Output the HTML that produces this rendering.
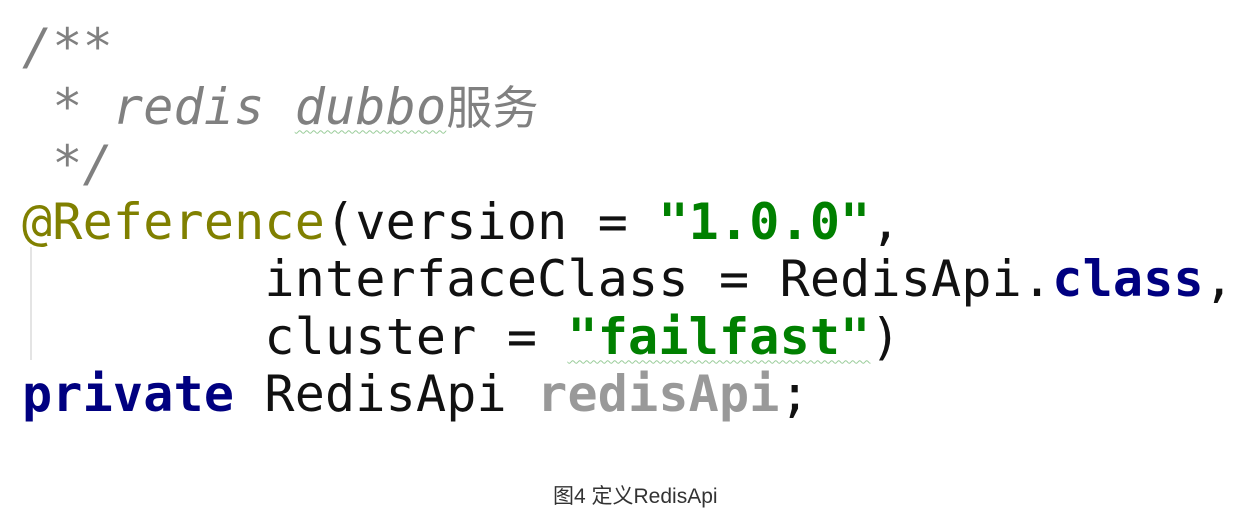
<!DOCTYPE html>
<html><head><meta charset="utf-8"><style>
html,body{margin:0;padding:0;background:#fff;width:1245px;height:516px;overflow:hidden;position:relative}
pre{position:absolute;left:22px;top:19px;margin:0;font-family:"DejaVu Sans Mono","Noto Sans CJK SC",monospace;font-size:50px;line-height:57.5px;color:#111;letter-spacing:0.2px}
.c{color:#808080;font-style:italic}
.n{font-style:normal;font-family:"Noto Sans CJK SC",sans-serif;font-size:46px}
.a{color:#808000}
.k{color:#000080;font-weight:bold}
.s{color:#008000;font-weight:bold}
.f{color:#999;font-weight:bold}
.w{text-decoration:underline wavy #9c9;text-decoration-thickness:1px;text-underline-offset:6px}
.g{position:absolute;left:30px;top:247px;width:2px;height:113px;background:#e4e4e4}
.cap{position:absolute;left:553px;top:480px;white-space:nowrap;font-family:"Liberation Sans","Noto Sans CJK SC",sans-serif;font-size:21px;color:#333}
</style></head><body>
<div class="g"></div>
<pre><span class="c">/**
 * redis <span class="w">dubbo</span><span class="n">服务</span>
 */</span>
<span class="a">@Reference</span>(version = <span class="s">"1.0.0"</span>,
        interfaceClass = RedisApi.<span class="k">class</span>,
        cluster = <span class="s w">"failfast"</span>)
<span class="k">private</span> RedisApi <span class="f">redisApi</span>;</pre>
<div class="cap">图4 定义RedisApi</div>
</body></html>
